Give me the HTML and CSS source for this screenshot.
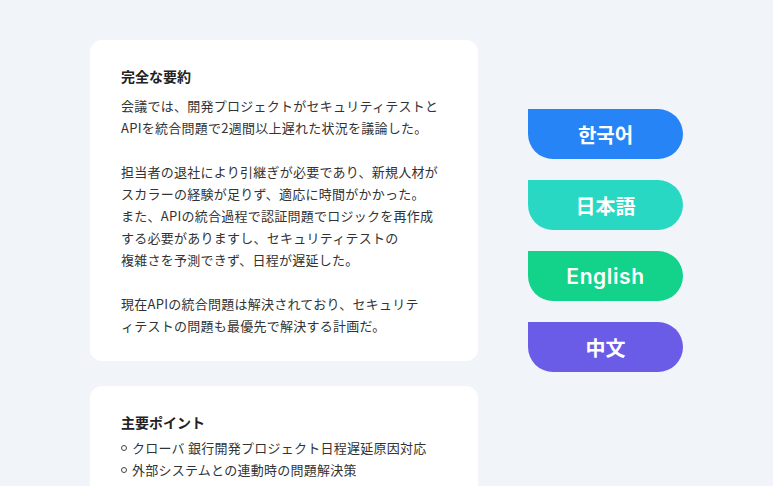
FILE: index.html
```html
<!DOCTYPE html>
<html lang="ja">
<head>
<meta charset="utf-8">
<link rel="stylesheet" href="styles.css">
</head>
<body>
<div class="page">
  <div class="cards">
    <section class="card">
      <h2 class="card-title">完全な要約</h2>
      <p class="body">会議では、開発プロジェクトがセキュリティテストと<br>APIを統合問題で2週間以上遅れた状況を議論した。</p>
      <p class="body">担当者の退社により引継ぎが必要であり、新規人材が<br>スカラーの経験が足りず、適応に時間がかかった。<br>また、APIの統合過程で認証問題でロジックを再作成<br>する必要がありますし、セキュリティテストの<br>複雑さを予測できず、日程が遅延した。</p>
      <p class="body">現在APIの統合問題は解決されており、セキュリテ<br>ィテストの問題も最優先で解決する計画だ。</p>
    </section>
    <section class="card">
      <h2 class="card-title card-title-tight">主要ポイント</h2>
      <ul class="points">
        <li>クローバ 銀行開発プロジェクト日程遅延原因対応</li>
        <li>外部システムとの連動時の問題解決策</li>
      </ul>
    </section>
  </div>
  <div class="langs">
    <button class="lang lang-ko">한국어</button>
    <button class="lang lang-ja">日本語</button>
    <button class="lang lang-en">English</button>
    <button class="lang lang-zh">中文</button>
  </div>
</div>
</body>
</html>
```

FILE: styles.css
```css
html, body {
  margin: 0;
  padding: 0;
}
body {
  background: #f1f4f9;
  font-family: "Noto Sans CJK JP", "Noto Sans", sans-serif;
  color: #333;
  height: 486px;
  overflow: hidden;
}
.page {
  display: flex;
  align-items: flex-start;
  gap: 50px;
  padding: 40px 0 0 90px;
}
.cards {
  width: 388px;
  display: flex;
  flex-direction: column;
  gap: 25px;
}
.card {
  background: #fff;
  border-radius: 12px;
  padding: 25px 30px 24px 31px;
}
.card-title {
  margin: 0 0 8px;
  font-size: 14px;
  font-weight: 700;
  line-height: 22px;
  color: #222;
}
.card-title-tight {
  margin-bottom: 4px;
}
.body {
  margin: 0;
  font-size: 13px;
  line-height: 22px;
  letter-spacing: 0.25px;
  color: #333;
}
.body + .body {
  margin-top: 22px;
}
.points {
  list-style: none;
  margin: 0;
  padding: 0;
  font-size: 13px;
  line-height: 22px;
  letter-spacing: 0.25px;
  color: #333;
}
.points li {
  display: flex;
  align-items: center;
  gap: 5px;
}
.points li::before {
  content: "";
  width: 4px;
  height: 4px;
  border: 1px solid #444;
  border-radius: 50%;
}
.langs {
  margin-top: 69px;
  display: flex;
  flex-direction: column;
  gap: 21px;
}
.lang {
  width: 155px;
  height: 50px;
  border: none;
  border-radius: 0 25px 25px 25px;
  color: #fff;
  font-family: "Noto Sans CJK KR", "Noto Sans CJK JP", sans-serif;
  font-size: 20px;
  font-weight: 700;
  padding: 0;
  cursor: pointer;
}
.lang-ko { background: #2684f6; }
.lang-ja { background: #29d8c3; font-family: "Noto Sans CJK JP", sans-serif; }
.lang-en { background: #12d389; font-family: "Inter", "Noto Sans", sans-serif; font-weight: 600; font-size: 21px; letter-spacing: 0.6px; }
.lang-zh { background: #6b5ce7; font-family: "Noto Sans CJK SC", sans-serif; }
```
